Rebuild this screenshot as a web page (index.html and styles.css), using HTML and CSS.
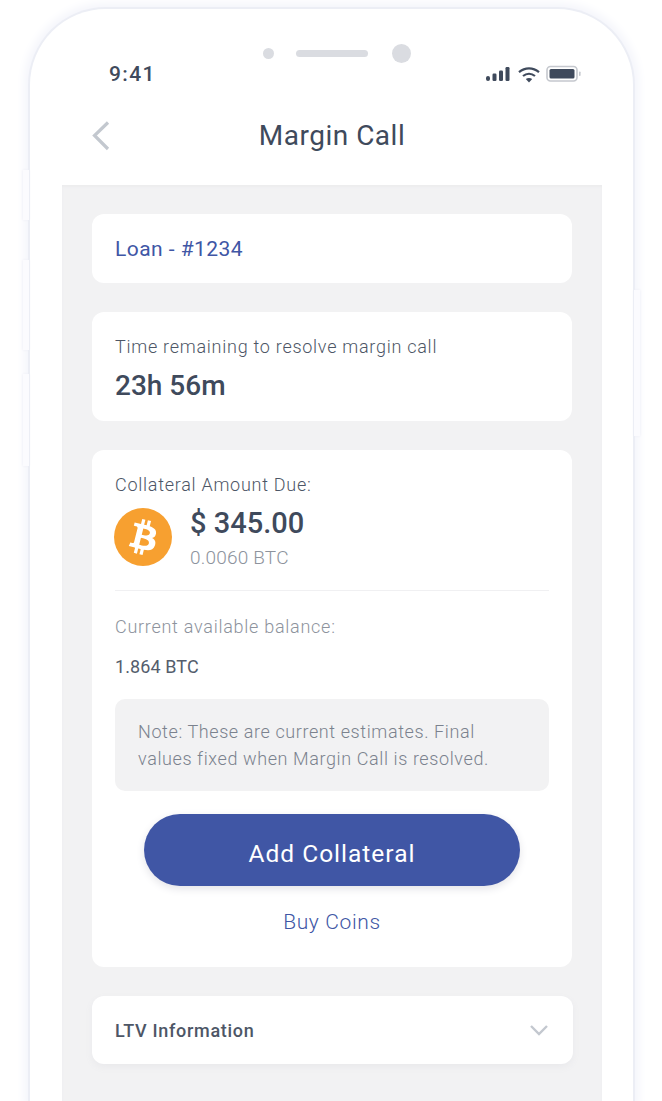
FILE: index.html
```html
<!DOCTYPE html>
<html lang="en">
<head>
  <meta charset="UTF-8" />
  <meta name="viewport" content="width=device-width, initial-scale=1.0"/>
  <title>Margin Call</title>
  <link rel="stylesheet" href="styles.css">
</head>
<body>
  <div class="phone">
    <span class="side-btn btn-a"></span>
    <span class="side-btn btn-b"></span>
    <span class="side-btn btn-c"></span>
    <span class="side-btn btn-d"></span>

    <div class="sensors">
      <span class="dot-small"></span>
      <span class="speaker"></span>
      <span class="dot-large"></span>
    </div>

    <div class="status">
      <span class="time">9:41</span>
      <div class="status-icons">
        <svg width="26" height="16" viewBox="0 0 26 16" fill="#3f4a5c">
          <rect x="0" y="10" width="4" height="5" rx="2"/>
          <rect x="6.500" y="7.500" width="4" height="7.500" rx="1.200"/>
          <rect x="13" y="4.500" width="4" height="10.500" rx="1.200"/>
          <rect x="19.500" y="1" width="4" height="14" rx="1.200"/>
        </svg>
        <svg class="wifi" width="24" height="17" viewBox="0 0 24 17" fill="none" stroke="#3f4a5c" stroke-width="2.200">
          <path d="M2 6.200C8 1 16 1 22 6.200"/>
          <path d="M6 10C9.600 7 14.400 7 18 10"/>
          <path d="M12 16.500L8.800 13.100C10.700 11.600 13.300 11.600 15.200 13.100Z" fill="#3f4a5c" stroke="none"/>
        </svg>
        <svg width="36" height="18" viewBox="0 0 36 18">
          <rect x="1" y="1.500" width="30" height="14.500" rx="3.500" fill="none" stroke="#c5c8ce" stroke-width="1.600"/>
          <rect x="3.500" y="4" width="25" height="9.500" rx="1.500" fill="#3f4a5c"/>
          <rect x="33" y="6.500" width="1.600" height="4.500" rx="0.800" fill="#c5c8ce"/>
        </svg>
      </div>
    </div>

    <header class="navbar">
      <svg class="back" width="22" height="32" viewBox="0 0 22 32" fill="none" stroke="#c3c8cf" stroke-width="3.200">
        <path d="M18 2.500L4.500 15.500L18 29"/>
      </svg>
      <h1>Margin Call</h1>
    </header>

    <main class="screen">
      <section class="card loan">Loan - #1234</section>

      <section class="card timer">
        <p class="label">Time remaining to resolve margin call</p>
        <p class="countdown">23h 56m</p>
      </section>

      <section class="card collateral">
        <p class="label">Collateral Amount Due:</p>
        <div class="coin-row">
          <svg class="coin" width="58" height="58" viewBox="0 0 32 32">
            <circle cx="16" cy="16" r="16" fill="#f7a030"/>
            <path fill="#fff" d="M23.189 14.020c.314-2.096-1.283-3.223-3.465-3.975l.708-2.840-1.728-.430-.690 2.765c-.454-.114-.920-.220-1.385-.326l.695-2.783L15.596 6l-.708 2.839c-.376-.086-.746-.170-1.104-.260l.002-.009-2.384-.595-.460 1.846s1.283.294 1.256.312c.700.175.826.638.805 1.006l-.806 3.235c.048.012.110.030.180.057l-.183-.045-1.130 4.532c-.086.212-.303.531-.793.410.018.025-1.256-.313-1.256-.313l-.858 1.978 2.250.561c.418.105.828.215 1.231.318l-.715 2.872 1.727.430.708-2.840c.472.127.930.245 1.378.357l-.706 2.828 1.728.430.715-2.866c2.948.558 5.164.333 6.097-2.333.752-2.146-.037-3.385-1.588-4.192 1.130-.260 1.980-1.003 2.207-2.538zm-3.950 5.538c-.533 2.147-4.148.986-5.320.695l.950-3.805c1.172.293 4.929.872 4.370 3.110zm.535-5.569c-.487 1.953-3.495.960-4.470.717l.860-3.450c.975.243 4.118.696 3.610 2.733z"/>
          </svg>
          <div>
            <p class="amount">$ 345.00</p>
            <p class="btc">0.0060 BTC</p>
          </div>
        </div>
        <hr class="divider">
        <p class="label muted">Current available balance:</p>
        <p class="balance">1.864 BTC</p>
        <div class="note">Note: These are current estimates. Final values fixed when Margin Call is resolved.</div>
        <button class="primary">Add Collateral</button>
        <a class="link" href="#">Buy Coins</a>
      </section>

      <section class="card ltv">
        <span>LTV Information</span>
        <svg width="20" height="14" viewBox="0 0 20 14" fill="none" stroke="#c3c8cf" stroke-width="2.400">
          <path d="M2 3L10 11L18 3"/>
        </svg>
      </section>
    </main>
  </div>
</body>
</html>
```

FILE: styles.css
```css
body {
  font-family: Roboto, 'Liberation Sans', sans-serif;
  margin: 0;
  background-color: #fff;
  color: #3f4a5c;
}

p {
  margin: 0;
}

.phone {
  position: relative;
  display: flex;
  flex-direction: column;
  box-sizing: border-box;
  width: 603px;
  height: 1092px;
  margin: 9px 0 0 30px;
  padding: 0 31px 0 32px;
  background: #fff;
  border-radius: 76px 76px 0 0;
  box-shadow: 0 0 0 2px #eceef5, 0 0 10px 6px #f4f5fb;
}

.side-btn {
  position: absolute;
  width: 6px;
  background: #fbfbfe;
  box-shadow: 0 0 3px #eceef5;
}

.btn-a { left: -7px; top: 161px; height: 50px; }
.btn-b { left: -7px; top: 251px; height: 90px; }
.btn-c { left: -7px; top: 365px; height: 92px; }
.btn-d { right: -7px; top: 281px; height: 146px; }

.sensors {
  display: flex;
  justify-content: center;
  align-items: center;
  height: 20px;
  padding: 34px 0 1px 9px;
}

.dot-small {
  width: 11px;
  height: 11px;
  margin-right: 22px;
  border-radius: 50%;
  background: #dadce1;
}

.speaker {
  width: 72px;
  height: 7px;
  margin-right: 24px;
  border-radius: 4px;
  background: #dadce1;
}

.dot-large {
  width: 19px;
  height: 19px;
  border-radius: 50%;
  background: #dadce1;
}

.status {
  display: flex;
  justify-content: space-between;
  align-items: center;
  height: 22px;
  margin-top: -1px;
  padding: 0 20px 0 47px;
}

.time {
  font-size: 21px;
  font-weight: 500;
  letter-spacing: 1.400px;
}

.status-icons {
  display: flex;
  align-items: center;
  gap: 5px;
}

.navbar {
  display: flex;
  justify-content: center;
  align-items: center;
  position: relative;
  height: 60px;
  margin-top: 20px;
}

.navbar h1 {
  margin: 0;
  font-size: 28px;
  font-weight: 400;
  letter-spacing: 0.500px;
}

.back {
  position: absolute;
  left: 28px;
  top: 15px;
}

.screen {
  flex: 1;
  display: flex;
  flex-direction: column;
  gap: 29px;
  margin-top: 20px;
  padding: 29px 30px 0;
  background: #f2f2f3;
  box-shadow: inset 0 2px 2px #ececee;
}

.card {
  background: #fff;
  border-radius: 12px;
  padding: 0 23px;
}

.loan {
  display: flex;
  align-items: center;
  height: 69px;
  font-size: 21px;
  letter-spacing: 0.450px;
  color: #4056a5;
}

.label {
  font-size: 18px;
  font-weight: 300;
  line-height: 22px;
  letter-spacing: 0.730px;
  color: #4d5666;
}

.muted {
  color: #8d939d;
}

.timer {
  height: 109px;
  padding-top: 24px;
  box-sizing: border-box;
}

.countdown {
  margin-top: 11px;
  font-size: 28px;
  font-weight: 500;
}

.collateral {
  height: 517px;
  padding-top: 24px;
  box-sizing: border-box;
}

.coin-row {
  display: flex;
  align-items: center;
  gap: 18px;
  margin-top: 10px;
}

.coin {
  margin: 0 0 2px -1px;
}

.amount {
  font-size: 29px;
  font-weight: 500;
  line-height: 34px;
}

.btc {
  margin-top: 6px;
  font-size: 19px;
  font-weight: 300;
  letter-spacing: 0.200px;
  color: #8d939d;
}

.divider {
  margin: 21px 0 25px;
  border: 0;
  border-top: 1px solid #f0f0f2;
}

.balance {
  margin-top: 18px;
  font-size: 18px;
  font-weight: 400;
  letter-spacing: 0.100px;
  color: #545d6c;
}

.note {
  margin-top: 22px;
  padding: 19px 23px;
  border-radius: 10px;
  background: #f2f2f3;
  font-size: 18px;
  font-weight: 300;
  line-height: 27px;
  letter-spacing: 0.600px;
  color: #7b828e;
}

.primary {
  display: block;
  width: 376px;
  height: 72px;
  margin: 23px auto 0;
  padding: 6px 0 0;
  border: 0;
  border-radius: 36px;
  background: #4056a5;
  color: #fff;
  font-family: inherit;
  font-size: 24.500px;
  letter-spacing: 1px;
  box-shadow: 0 3px 8px #e4e4e8;
}

.link {
  display: block;
  margin-top: 24px;
  text-align: center;
  font-size: 21px;
  font-weight: 300;
  letter-spacing: 0.650px;
  color: #4056a5;
  text-decoration: none;
}

.ltv {
  display: flex;
  justify-content: space-between;
  align-items: center;
  height: 68px;
  margin-right: -1px;
  padding-right: 24px;
  font-size: 18px;
  font-weight: 500;
  letter-spacing: 0.700px;
  color: #4d5666;
  box-shadow: 0 3px 7px #e9e9ec;
}
```
